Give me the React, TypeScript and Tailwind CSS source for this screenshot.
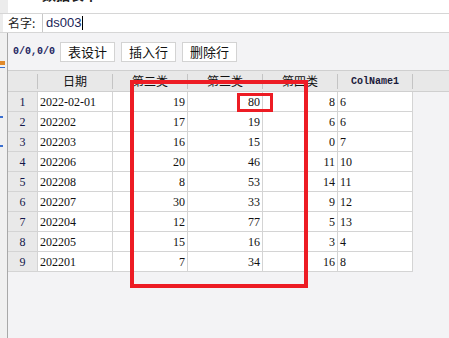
import React from "react";

const rows: string[][] = [
  ["1", "2022-02-01", "19", "80", "8", "6"],
  ["2", "202202", "17", "19", "6", "6"],
  ["3", "202203", "16", "15", "0", "7"],
  ["4", "202206", "20", "46", "11", "10"],
  ["5", "202208", "8", "53", "14", "11"],
  ["6", "202207", "30", "33", "9", "12"],
  ["7", "202204", "12", "77", "5", "13"],
  ["8", "202205", "15", "16", "3", "4"],
  ["9", "202201", "7", "34", "16", "8"],
];

const cjk = { fontFamily: '"Noto Sans CJK SC", "Noto Sans", sans-serif' };
const serif = { fontFamily: '"Liberation Serif", serif' };
const mono = { fontFamily: '"Liberation Mono", monospace' };

function Sep() {
  return (
    <div className="flex h-[15px] shrink-0">
      <div className="w-px bg-[#c4c4c4]" />
    </div>
  );
}

function HeaderCell({ children, w, font }: { children?: React.ReactNode; w: string; font?: React.CSSProperties }) {
  return (
    <div className={`${w} shrink-0 flex items-center justify-center text-[12px] text-[#111]`} style={font ?? cjk}>
      {children}
    </div>
  );
}

export default function App() {
  return (
    <div className="relative w-[449px] h-[338px] overflow-hidden bg-white flex">
      {/* left strip */}
      <div className="w-[8px] shrink-0 flex flex-col">
        <div className="h-[13px] bg-[#ececec]" />
        <div className="h-[20px] border-y border-[#d6d6d6] flex">
          <div className="w-[3px] bg-[#ececec]" />
          <div className="flex-1 bg-white" />
        </div>
        <div className="flex-1 bg-[#f0f0f0] border-r border-[#a8a8a8] flex flex-col">
          <div className="h-[28px]" />
          <div className="w-[5px] h-[4px] bg-[#e08a2c]" />
          <div className="h-[2px]" />
          <div className="w-[5px] h-[1px] bg-[#3a6fd0]" />
          <div className="h-[48px]" />
          <div className="w-[3px] h-[2px] bg-[#3a6fd0]" />
          <div className="h-[27px]" />
          <div className="w-[3px] h-[2px] bg-[#3a6fd0]" />
        </div>
      </div>

      {/* main */}
      <div className="flex-1 flex flex-col min-w-0">
        {/* clipped title */}
        <div className="h-[13px] overflow-hidden bg-white pl-[34px]">
          <div className="-mt-[15px] text-[14px] leading-[18px] font-bold text-[#222]" style={cjk}>
            数据表单
          </div>
        </div>

        {/* name row */}
        <div className="h-[20px] border-y border-[#d6d6d6] flex items-stretch bg-white">
          <div className="w-[34px] shrink-0 flex items-center text-[12px] text-[#222]" style={cjk}>
            名字:
          </div>
          <div className="flex-1 border-l border-[#c8c8c8] flex items-center pl-[3px]">
            <span className="text-[13px] text-[#1a2558]" style={{ fontFamily: '"Liberation Sans", sans-serif' }}>
              ds003
            </span>
            <span className="w-px h-[14px] bg-black ml-px" />
          </div>
        </div>

        {/* toolbar */}
        <div className="h-[37px] bg-[#f3f3f5] flex items-center">
          <div className="w-[52px] shrink-0 pl-[5px] text-[10px] font-bold text-[#1c2460]" style={mono}>
            0/0,0/0
          </div>
          <div className="flex gap-[6px]">
            {["表设计", "插入行", "删除行"].map((t) => (
              <div
                key={t}
                className="w-[55px] h-[20px] bg-white border border-[#d3d3d3] flex items-center justify-center text-[13px] text-[#111]"
                style={cjk}
              >
                {t}
              </div>
            ))}
          </div>
        </div>

        {/* grid */}
        <div className="flex-1 bg-[#f3f3f5] flex flex-col">
          <div className="h-[22px] border-y border-[#cfcfcf] bg-[#e8e8e8] flex items-center">
            <HeaderCell w="w-[29px]" />
            <Sep />
            <HeaderCell w="w-[74px]">日期</HeaderCell>
            <Sep />
            <HeaderCell w="w-[74px]">第二类</HeaderCell>
            <Sep />
            <HeaderCell w="w-[74px]">第三类</HeaderCell>
            <Sep />
            <HeaderCell w="w-[74px]">第四类</HeaderCell>
            <Sep />
            <HeaderCell w="w-[74px]" font={mono}>
              <span className="text-[10px] font-bold text-[#1a1a3a]">ColName1</span>
            </HeaderCell>
            <Sep />
          </div>

          {rows.map((r) => (
            <div key={r[0]} className="flex h-[20px] text-[12px] text-[#111]" style={serif}>
              <div className="w-[30px] shrink-0 bg-[#e9e9e9] border-r border-b border-[#d4d4d4] flex items-center justify-center text-[#12164a]">
                {r[0]}
              </div>
              <div className="w-[75px] shrink-0 bg-white border-r border-b border-[#d4d4d4] flex items-center pl-[2px]">
                {r[1]}
              </div>
              {[r[2], r[3], r[4]].map((v, i) => (
                <div
                  key={i}
                  className="w-[75px] shrink-0 bg-white border-r border-b border-[#d4d4d4] flex items-center justify-end pr-[2px]"
                >
                  {v}
                </div>
              ))}
              <div className="w-[75px] shrink-0 bg-white border-r border-b border-[#d4d4d4] flex items-center pl-[2px]">
                {r[5]}
              </div>
            </div>
          ))}
        </div>
      </div>

      {/* red annotation boxes */}
      <div className="absolute left-[130px] top-[80px] w-[178px] h-[208px] border-4 border-[#ed1c24] pointer-events-none" />
      <div className="absolute left-[237px] top-[93px] w-[36px] h-[19px] border-[3px] border-[#ed1c24] pointer-events-none" />
    </div>
  );
}
